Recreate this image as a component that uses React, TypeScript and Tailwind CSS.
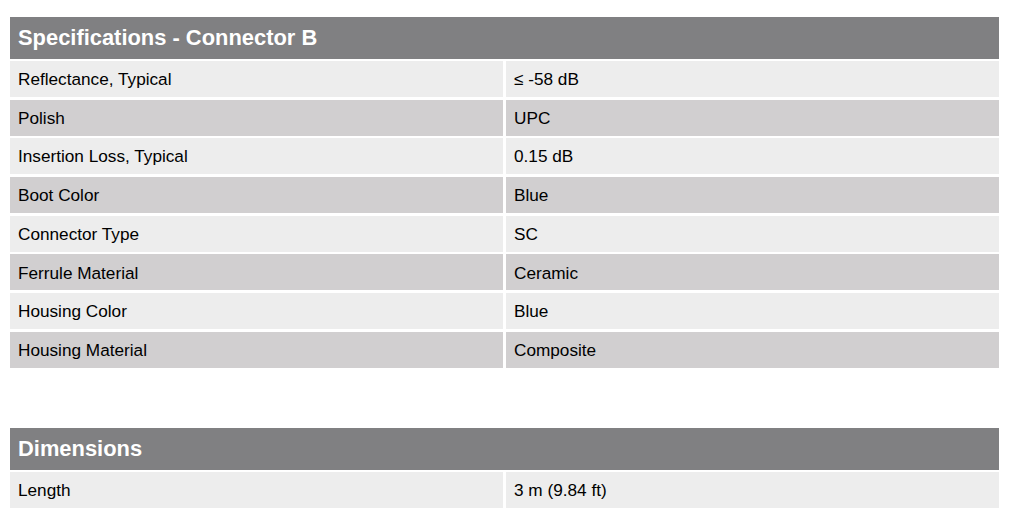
import React from "react";

type Row = { label: string; value: string };

const connectorB: Row[] = [
  { label: "Reflectance, Typical", value: "≤ -58 dB" },
  { label: "Polish", value: "UPC" },
  { label: "Insertion Loss, Typical", value: "0.15 dB" },
  { label: "Boot Color", value: "Blue" },
  { label: "Connector Type", value: "SC" },
  { label: "Ferrule Material", value: "Ceramic" },
  { label: "Housing Color", value: "Blue" },
  { label: "Housing Material", value: "Composite" },
];

const dimensions: Row[] = [{ label: "Length", value: "3 m (9.84 ft)" }];

const SpecTable = ({ title, rows }: { title: string; rows: Row[] }) => {
  return (
    <div className="w-[989px]">
      {/* Section header */}
      <div className="h-[42px] bg-[#808082] flex items-center pl-[8px]">
        <h2 className="text-[21.9px] font-bold text-white leading-none">{title}</h2>
      </div>

      <div className="flex flex-col gap-[2.7px] mt-[2px]">
        {rows.map((row, index) => {
          const bg = index % 2 === 0 ? "bg-[#ededed]" : "bg-[#d1cfd0]";
          return (
            <div key={index} className="grid grid-cols-2 gap-[3px] h-[36px]">
              <div className={`${bg} flex items-center pl-[8px] pt-[2px] text-[17.2px] text-black`}>
                {row.label}
              </div>
              <div className={`${bg} flex items-center pl-[8px] pt-[2px] text-[17.2px] text-black`}>
                {row.value}
              </div>
            </div>
          );
        })}
      </div>
    </div>
  );
};

const App = () => {
  return (
    <div
      className="w-[1016px] h-[526px] bg-white pt-[17px] pl-[10px]"
      style={{ fontFamily: '"Liberation Sans", Arial, sans-serif' }}
    >
      <SpecTable title="Specifications - Connector B" rows={connectorB} />
      <div className="mt-[60px]">
        <SpecTable title="Dimensions" rows={dimensions} />
      </div>
    </div>
  );
};

export default App;
